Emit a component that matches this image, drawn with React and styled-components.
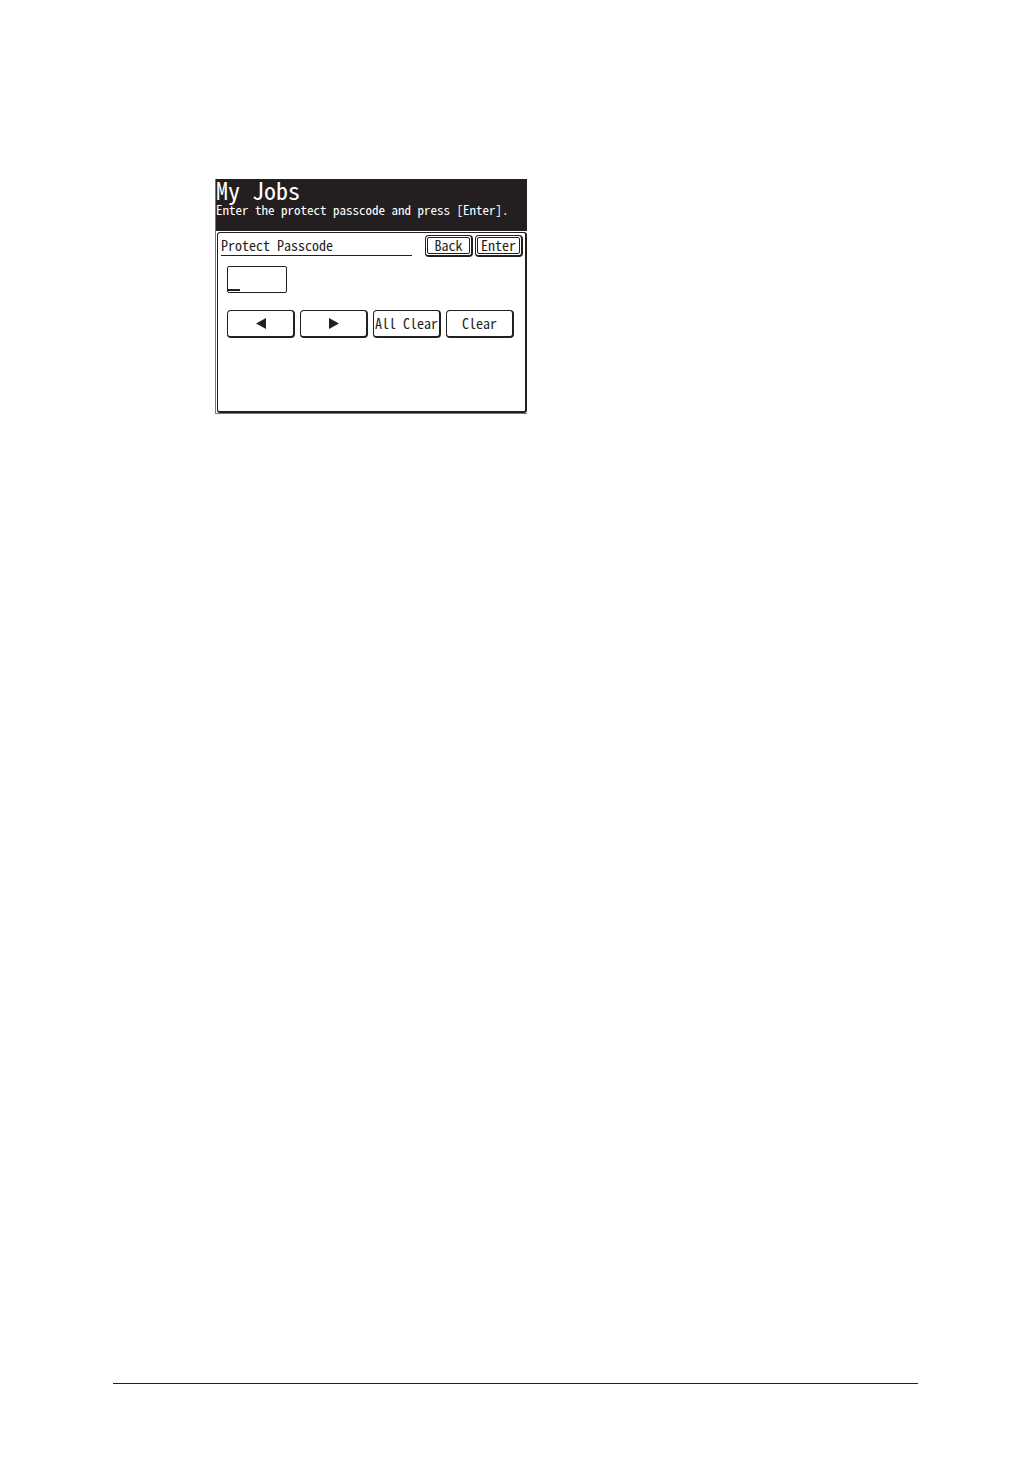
import React, { useState } from 'react';
import styled, { createGlobalStyle } from 'styled-components';

const INK = '#231f20';

const GlobalStyle = createGlobalStyle`
  *, *::before, *::after {
    box-sizing: border-box;
  }

  body {
    margin: 0;
    background: #fff;
    color: ${INK};
    font-family: 'Noto Sans Mono CJK JP', 'Liberation Mono', monospace;
    font-size: 14px;
    line-height: 14px;
  }
`;

const Page = styled.div`
  display: flex;
  flex-direction: column;
  min-height: 100vh;
  padding: 179px 114px 73px 113px;
`;

const Content = styled.main`
  flex: 1;
  padding-left: 102px;
`;

const Rule = styled.hr`
  width: 100%;
  margin: 0;
  border: 0;
  border-top: 1px solid ${INK};
`;

const Screen = styled.section`
  max-width: 312px;
  border: 1px solid #77787b;
  border-width: 0 0 1px 1px;
`;

const Header = styled.header`
  height: 52px;
  background: ${INK};
  color: #fff;
`;

const Title = styled.h1`
  margin: 0;
  font-size: 24px;
  font-weight: 500;
  line-height: 22px;
`;

const Message = styled.p`
  margin: 2px 0 0;
  font-size: 13px;
  white-space: nowrap;
`;

const Panel = styled.form`
  min-height: 181px;
  margin: 1px 0 0 1px;
  padding: 2px 2px 2px 3px;
  border: 1px solid ${INK};
  border-width: 1px 2px 2px 1px;
  border-radius: 3px;
`;

const Toolbar = styled.div`
  display: flex;
  align-items: flex-start;
  gap: 2px;
`;

const FieldLabel = styled.label`
  flex: 1;
  margin-right: 11px;
  padding: 3px 0;
  border-bottom: 1px solid ${INK};
`;

const Button = styled.button`
  height: 28px;
  padding: 0 0 1px;
  border: 1px solid ${INK};
  border-width: 1px 2px 2px 1px;
  border-radius: 4px;
  background: #fff;
  color: inherit;
  font: inherit;
  white-space: nowrap;
`;

const FramedButton = styled(Button)`
  width: 48px;
  height: 22px;
  padding: 1px;

  span {
    display: flex;
    align-items: center;
    justify-content: center;
    height: 100%;
    padding-bottom: 2px;
    border: 1px solid ${INK};
    border-radius: 2px;
  }
`;

const Entry = styled.div`
  position: relative;
  width: 60px;
  margin: 9px 6px 17px;
`;

const CodeInput = styled.input`
  display: block;
  width: 100%;
  height: 27px;
  padding: 0 2px;
  border: 1px solid ${INK};
  border-radius: 2px;
  background: #fff;
  color: inherit;
  font: inherit;
  outline: none;
`;

const Cursor = styled.span`
  position: absolute;
  bottom: 2px;
  left: 1px;
  width: 12px;
  height: 2px;
  background: ${INK};
`;

const Keys = styled.div`
  display: grid;
  grid-template-columns: repeat(4, 1fr);
  gap: 5px;
  padding: 0 9px 0 6px;
`;

const Arrow = styled.svg`
  display: block;
  width: 10px;
  height: 11px;
  margin: 0 auto;
  fill: ${INK};
`;

const App = () => {
  const [code, setCode] = useState('');

  return (
    <>
      <GlobalStyle />
      <Page>
        <Content>
          <Screen>
            <Header>
              <Title>My Jobs</Title>
              <Message>Enter the protect passcode and press [Enter].</Message>
            </Header>
            <Panel onSubmit={(e) => e.preventDefault()}>
              <Toolbar>
                <FieldLabel htmlFor="passcode">Protect Passcode</FieldLabel>
                <FramedButton type="button"><span>Back</span></FramedButton>
                <FramedButton type="submit"><span>Enter</span></FramedButton>
              </Toolbar>
              <Entry>
                <CodeInput
                  id="passcode"
                  type="text"
                  maxLength={4}
                  value={code}
                  onChange={(e) => setCode(e.target.value)}
                />
                <Cursor />
              </Entry>
              <Keys>
                <Button type="button" aria-label="Move left">
                  <Arrow viewBox="0 0 10 11"><path d="M0 5.5 10 0v11z" /></Arrow>
                </Button>
                <Button type="button" aria-label="Move right">
                  <Arrow viewBox="0 0 10 11"><path d="M10 5.5 0 0v11z" /></Arrow>
                </Button>
                <Button type="button" onClick={() => setCode('')}>All Clear</Button>
                <Button type="button" onClick={() => setCode(code.slice(0, -1))}>Clear</Button>
              </Keys>
            </Panel>
          </Screen>
        </Content>
        <Rule />
      </Page>
    </>
  );
};

export default App;
